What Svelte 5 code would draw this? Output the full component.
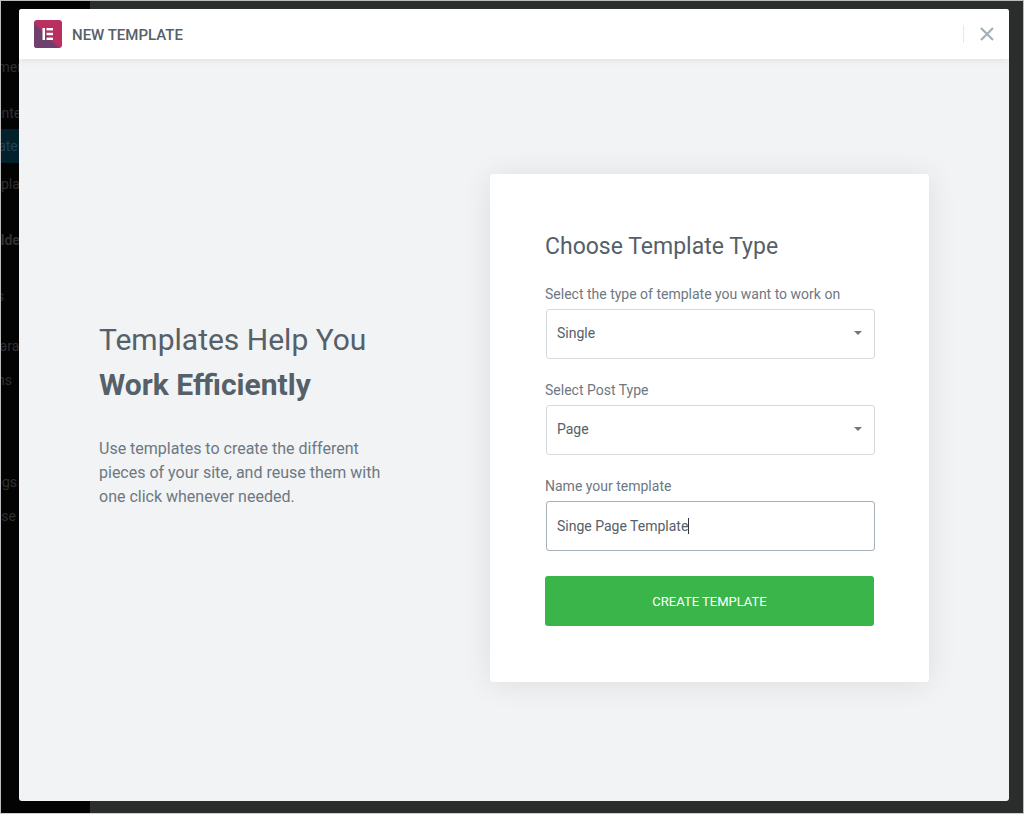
<script>
    const sidebarItems = [
        { label: "Customer", gap: 56, end: 21 },
        { label: "Center", gap: 26, end: 25 },
        { label: "Templates", gap: 6, end: 24, active: true },
        { label: "Templates", gap: 11, end: 38 },
        { label: "Builder", gap: 36, end: 24, bold: true },
        { label: "Tools", gap: 36, end: 3 },
        { label: "Parameters", gap: 30, end: 62 },
        { label: "Extensions", gap: 14, end: 11 },
        { label: "Settings", gap: 82, end: 16 },
        { label: "Collapse", gap: 14, end: 15 },
    ];
</script>

<div class="screen">
    <aside class="sidebar">
        {#each sidebarItems as item}
            <div
                class="side-item"
                class:active={item.active}
                class:bold={item.bold}
                style="margin-top: {item.gap}px; width: {item.end}px"
            >
                <span>{item.label}</span>
            </div>
        {/each}
    </aside>

    <div class="modal">
        <header class="modal-header">
            <svg class="logo" viewBox="0 0 28 28" width="28" height="28">
                <rect width="28" height="28" rx="3" fill="#b92f60" />
                <path d="M0 3 L25 28 H3 A3 3 0 0 1 0 25 Z" fill="#6f3f6e" />
                <rect x="8.5" y="8" width="2.5" height="12" fill="#fff" />
                <rect x="12.5" y="8" width="6.5" height="2.4" fill="#fff" />
                <rect x="12.5" y="12.8" width="6.5" height="2.4" fill="#fff" />
                <rect x="12.5" y="17.6" width="6.5" height="2.4" fill="#fff" />
            </svg>
            <span class="modal-title">NEW TEMPLATE</span>
            <span class="divider"></span>
            <svg class="close" viewBox="0 0 14 14" width="14" height="14">
                <path d="M1 1 L13 13 M13 1 L1 13" stroke="#a4afb7" stroke-width="2.2" fill="none" />
            </svg>
        </header>

        <div class="modal-body">
            <div class="intro">
                <h1>Templates Help You <strong>Work Efficiently</strong></h1>
                <p>Use templates to create the different pieces of your site, and reuse them with one click whenever needed.</p>
            </div>

            <form class="card" on:submit|preventDefault>
                <h2>Choose Template Type</h2>

                <label for="type">Select the type of template you want to work on</label>
                <div class="select">
                    <select id="type">
                        <option>Single</option>
                    </select>
                </div>

                <label for="post">Select Post Type</label>
                <div class="select">
                    <select id="post">
                        <option>Page</option>
                    </select>
                </div>

                <label for="name">Name your template</label>
                <div class="input" id="name">Singe Page Template<span class="caret"></span></div>

                <button type="submit">CREATE TEMPLATE</button>
            </form>
        </div>
    </div>
</div>

<style>
    :global(body) {
        margin: 0;
        font-family: Roboto, "Liberation Sans", sans-serif;
    }
    .screen {
        position: relative;
        box-sizing: border-box;
        display: flex;
        width: 1024px;
        height: 814px;
        overflow: hidden;
        background: #2b2c2c;
        border: 1px solid #bdbdbd;
        border-bottom-color: #cfcfcf;
    }
    .sidebar {
        width: 89px;
        height: 100%;
        background: #030304;
    }
    .side-item {
        display: flex;
        justify-content: flex-end;
        align-items: center;
        height: 20px;
        font-size: 14px;
        white-space: nowrap;
        color: #303031;
    }
    .side-item.bold {
        font-weight: 700;
    }
    .side-item.active {
        height: 34px;
        background: #03202d;
        color: #24414f;
    }
    .modal {
        position: absolute;
        top: 8px;
        left: 18px;
        display: flex;
        flex-direction: column;
        width: 990px;
        height: 792px;
        overflow: hidden;
        border-radius: 3px;
        background: #f1f3f5;
    }
    .modal-header {
        display: flex;
        align-items: center;
        flex: none;
        height: 50px;
        padding: 0 15px;
        background: #fff;
        box-shadow: 0 0 8px rgba(0, 0, 0, 0.1);
        z-index: 1;
    }
    .logo {
        flex: none;
    }
    .modal-title {
        margin: 1px 0 0 10px;
        font-size: 15px;
        font-weight: 500;
        color: #556068;
    }
    .divider {
        width: 1px;
        height: 18px;
        margin-left: auto;
        background: #e6e9ec;
    }
    .close {
        margin-left: 16px;
    }
    .modal-body {
        display: flex;
        align-items: center;
        justify-content: space-between;
        flex: 1;
        padding: 0 80px 4px;
    }
    .intro {
        width: 290px;
        margin-bottom: 30px;
    }
    h1 {
        margin: 0;
        font-size: 30px;
        font-weight: 400;
        line-height: 45px;
        color: #556068;
    }
    h1 strong {
        display: block;
        font-weight: 700;
    }
    .intro p {
        margin: 30px 0 0;
        font-size: 16px;
        line-height: 24px;
        color: #6d7882;
    }
    .card {
        box-sizing: border-box;
        display: flex;
        flex-direction: column;
        flex: none;
        width: 439px;
        height: 508px;
        padding: 56px 55px;
        border-radius: 3px;
        background: #fff;
        box-shadow: 0 2px 30px rgba(0, 0, 0, 0.09);
    }
    h2 {
        flex: none;
        margin: 0 0 21px;
        font-size: 23px;
        font-weight: 400;
        line-height: 33px;
        color: #556068;
    }
    label {
        flex: none;
        font-size: 14px;
        line-height: 21px;
        color: #6d7882;
    }
    .select {
        position: relative;
        flex: none;
        margin: 4px 0 21px 1px;
    }
    .select::after {
        content: "";
        position: absolute;
        top: 22px;
        right: 12px;
        border-style: solid;
        border-width: 4.5px 4.5px 0;
        border-color: #6d7882 transparent transparent;
    }
    select {
        box-sizing: border-box;
        display: block;
        width: 329px;
        height: 50px;
        padding: 0 10px 2px;
        border: 1px solid #d5dadf;
        border-radius: 3px;
        background: #fff;
        font: inherit;
        font-size: 14px;
        color: #556068;
        appearance: none;
    }
    .input {
        box-sizing: border-box;
        display: flex;
        align-items: center;
        flex: none;
        width: 329px;
        height: 50px;
        margin: 4px 0 25px 1px;
        padding: 0 10px;
        border: 1px solid #a4afb7;
        border-radius: 3px;
        font-size: 14px;
        color: #556068;
    }
    .caret {
        width: 1px;
        height: 16px;
        background: #2b3440;
    }
    button {
        flex: none;
        width: 329px;
        height: 50px;
        border: 0;
        border-radius: 3px;
        background: #39b54a;
        font: inherit;
        font-size: 13px;
        font-weight: 400;
        color: #fff;
    }
</style>
